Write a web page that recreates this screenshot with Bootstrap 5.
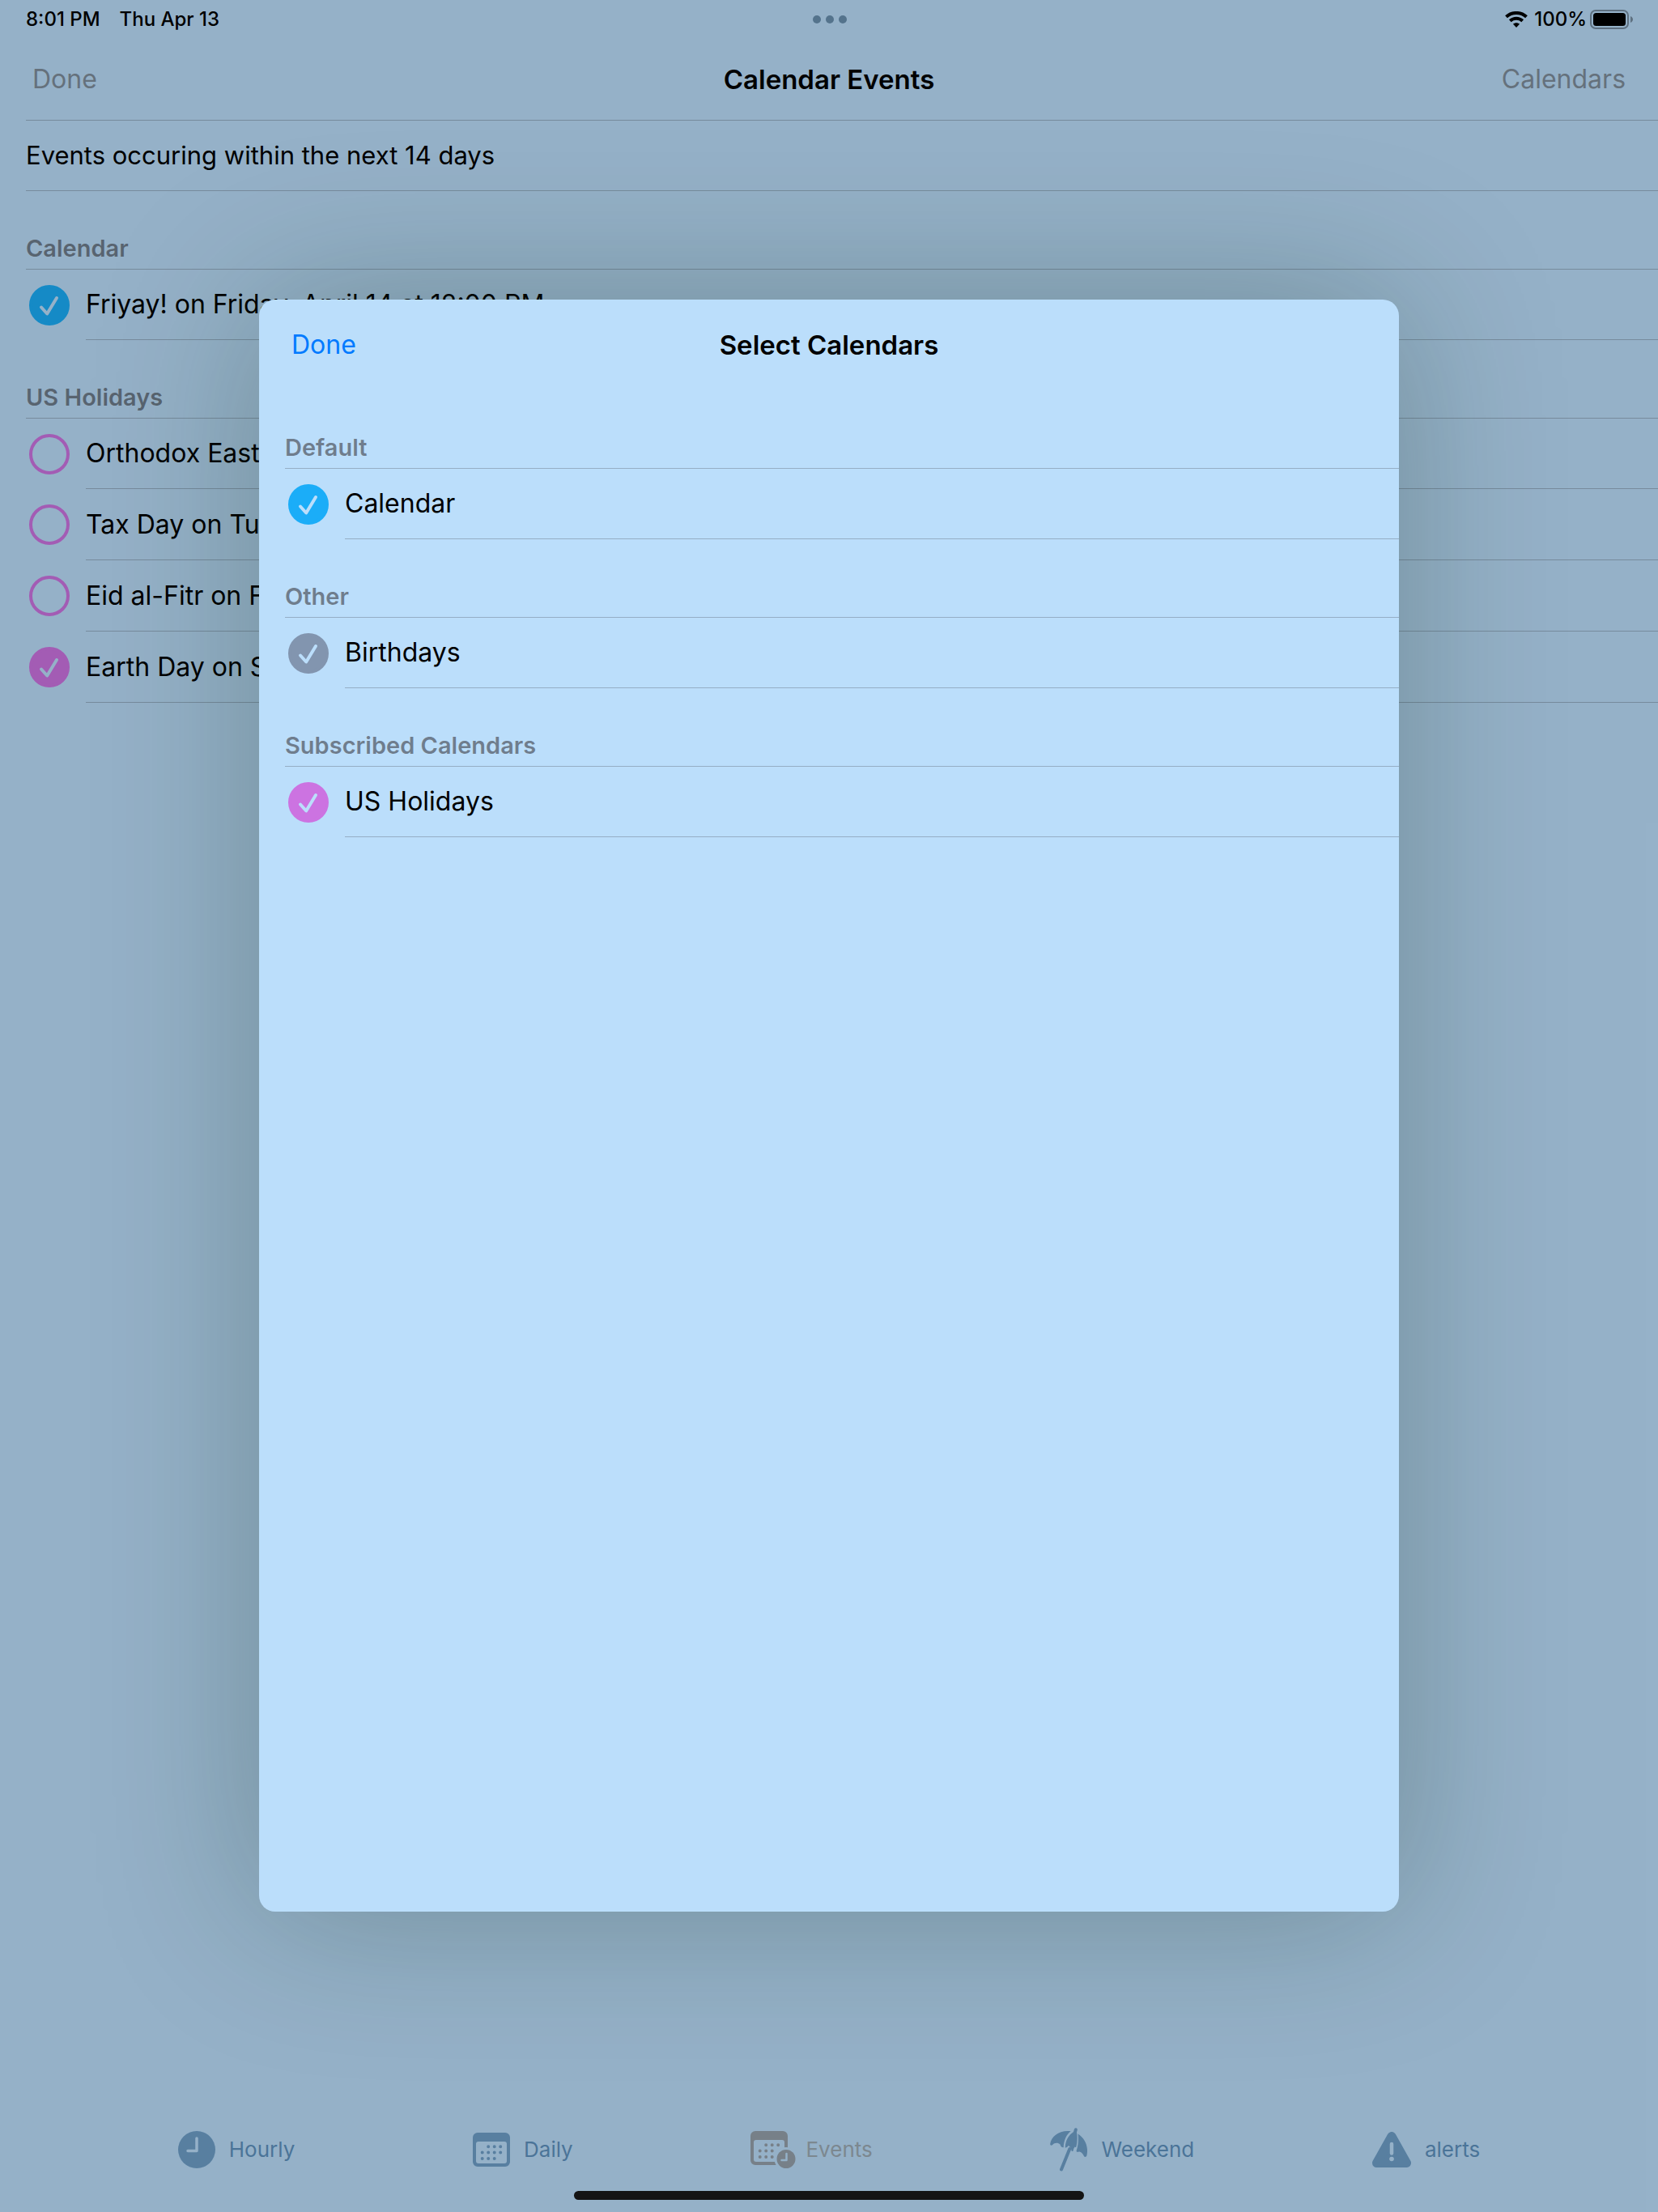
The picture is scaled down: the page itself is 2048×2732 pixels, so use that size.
<!DOCTYPE html>
<html lang="en">
<head>
<meta charset="utf-8">
<meta name="viewport" content="width=device-width, initial-scale=1">
<title>Calendar Events</title>
<link href="https://cdn.jsdelivr.net/npm/bootstrap@5.3.0/dist/css/bootstrap.min.css" rel="stylesheet">
<style>
  :root { --sky: #bbdefb; --hairline: rgba(60, 60, 67, .29); --muted: rgba(60, 60, 67, .6); }
  body { background: var(--sky); color: #000; font-family: Inter, "Liberation Sans", sans-serif; font-size: 32px; line-height: 40px; }
  .status-bar { height: 48px; padding: 0 30px 0 32px; font-size: 24px; line-height: 30px; font-weight: 500; }
  .status-bar > div { flex: 1 1 0; }
  .title-bar { height: 100px; padding: 0 40px; }
  .title-bar h1, .sheet-bar h2 { font-size: 33px; line-height: 40px; font-weight: 600; }
  .title-bar > div, .sheet-bar > div { flex: 1 1 0; }
  .bar-btn { border: 0; padding: 0; background: none; font-size: 32px; line-height: 40px; color: #7f8e9b; }
  .sheet .bar-btn { color: #007aff; }
  .note-row { height: 88px; margin-left: 32px; border-top: 1px solid var(--hairline); border-bottom: 1px solid var(--hairline); font-size: 31px; }
  .group-title { height: 97px; margin: 0 0 0 32px; padding-bottom: 7px; border-bottom: 1px solid var(--hairline); font-size: 29px; line-height: 36px; font-weight: 600; color: var(--muted); }
  .check-row { padding-left: 36px; gap: 20px; height: 88px; }
  .group-title + .check-row { height: 87px; }
  .check-row label { border-bottom: 1px solid var(--hairline); white-space: nowrap; }
  .dot-check.form-check-input { width: 50px; height: 50px; margin: 0; border: 4px solid var(--tone); border-radius: 50%; background-color: transparent; background-origin: border-box; background-size: 50px 50px; }
  .dot-check.form-check-input:checked { background-color: var(--tone); border-color: var(--tone); background-image: url("data:image/svg+xml,%3Csvg xmlns='http://www.w3.org/2000/svg' viewBox='0 0 50 50'%3E%3Cpath d='M15 27.5l7.2 8L34 16' fill='none' stroke='%23bbdefb' stroke-width='4' stroke-linecap='round' stroke-linejoin='round'/%3E%3C/svg%3E"); }
  .tone-blue { --tone: #1badf8; }
  .tone-pink { --tone: #cc73e1; }
  .tone-slate { --tone: #8295af; }
  .tab-row { height: 102px; font-size: 26px; line-height: 30px; }
  .tab-row a { gap: 17px; color: #5e92bf; text-decoration: none; }
  .tab-row svg { color: #6e9fc9; }
  .tab-row a.active { color: #9caab4; gap: 12px; }
  .tab-row a.active svg { color: #95a1ab; }
  .home-bar { width: 630px; height: 11px; margin-bottom: 15px; border-radius: 6px; background: #141414; }
  .dimmer { background: rgba(0, 0, 0, .2); padding: 370px 320px 371px; }
  .sheet { background: var(--sky); border-radius: 20px; box-shadow: 0 0 200px rgba(10, 45, 25, .27); }
  .sheet-bar { height: 112px; padding: 0 40px; }
</style>
</head>
<body>
<div class="position-relative min-vh-100 d-flex flex-column overflow-hidden">
  <div class="status-bar d-flex align-items-center">
    <div class="d-flex gap-4"><span>8:01 PM</span><span>Thu Apr 13</span></div>
    <svg width="44" height="10" viewBox="0 0 44 10" fill="#6990b0" aria-hidden="true"><circle cx="6" cy="5" r="5"/><circle cx="22" cy="5" r="5"/><circle cx="38" cy="5" r="5"/></svg>
    <div class="d-flex align-items-center justify-content-end">
      <svg class="me-2" width="28" height="20" viewBox="0 0 28 20" fill="none" stroke="#000" aria-hidden="true"><path d="M1.500 6.800C8.500 .3 19.500 .3 26.500 6.800" stroke-width="4"/><path d="M6.300 11.700c4.500-4 10.900-4 15.400 0" stroke-width="4"/><path d="M14 20l-4-4.200c2.200-2 5.800-2 8 0z" fill="#000" stroke="none"/></svg>
      <span>100%</span>
      <svg class="ms-1" width="54" height="24" viewBox="0 0 54 24" aria-hidden="true"><rect x="1" y="1" width="46" height="22" rx="6" fill="none" stroke="#768da1" stroke-width="2"/><rect x="4" y="4" width="40" height="16" rx="3.500"/><path d="M50 8c4 1.500 4 6.500 0 8z" fill="#768da1"/></svg>
    </div>
  </div>
  <header class="title-bar d-flex align-items-center">
    <div><button type="button" class="bar-btn">Done</button></div>
    <h1 class="m-0">Calendar Events</h1>
    <div class="text-end"><button type="button" class="bar-btn">Calendars</button></div>
  </header>
  <main class="flex-grow-1">
    <div class="note-row d-flex align-items-center">Events occuring within the next 14 days</div>
    <section>
      <h2 class="group-title d-flex align-items-end">Calendar</h2>
      <div class="check-row d-flex align-items-center"><input class="form-check-input dot-check tone-blue flex-shrink-0" type="checkbox" id="friyay" checked><label for="friyay" class="flex-grow-1 h-100 d-flex align-items-center">Friyay! on Friday, April 14 at 12:00 PM</label></div>
    </section>
    <section>
      <h2 class="group-title d-flex align-items-end">US Holidays</h2>
      <div class="check-row d-flex align-items-center"><input class="form-check-input dot-check tone-pink flex-shrink-0" type="checkbox" id="easter"><label for="easter" class="flex-grow-1 h-100 d-flex align-items-center">Orthodox Easter</label></div>
      <div class="check-row d-flex align-items-center"><input class="form-check-input dot-check tone-pink flex-shrink-0" type="checkbox" id="tax"><label for="tax" class="flex-grow-1 h-100 d-flex align-items-center">Tax Day on Tuesday</label></div>
      <div class="check-row d-flex align-items-center"><input class="form-check-input dot-check tone-pink flex-shrink-0" type="checkbox" id="eid"><label for="eid" class="flex-grow-1 h-100 d-flex align-items-center">Eid al-Fitr on Friday</label></div>
      <div class="check-row d-flex align-items-center"><input class="form-check-input dot-check tone-pink flex-shrink-0" type="checkbox" id="earth" checked><label for="earth" class="flex-grow-1 h-100 d-flex align-items-center">Earth Day on Saturday</label></div>
    </section>
  </main>
  <footer class="d-flex flex-column align-items-center">
    <nav class="tab-row w-100 d-flex justify-content-evenly">
      <a href="#" class="d-flex align-items-center">
        <svg width="46" height="46" viewBox="0 0 46 46" aria-hidden="true"><circle cx="23" cy="23" r="23" fill="currentColor"/><path d="M23 9v15.500H12" fill="none" stroke="#bbdefb" stroke-width="3.500" stroke-linecap="round" stroke-linejoin="round"/></svg>
        <span>Hourly</span></a>
      <a href="#" class="d-flex align-items-center">
        <svg width="46" height="42" viewBox="0 0 46 42" fill="currentColor" aria-hidden="true"><path fill-rule="evenodd" d="M6 0h34a6 6 0 0 1 6 6v30a6 6 0 0 1-6 6H6a6 6 0 0 1-6-6V6a6 6 0 0 1 6-6zM7 11a3 3 0 0 0-3 3v21a3 3 0 0 0 3 3h32a3 3 0 0 0 3-3V14a3 3 0 0 0-3-3z"/><path d="M19.200 17.200h.01M26.700 17.200h.01M34.200 17.200h.01M11.700 24.500h.01M19.200 24.500h.01M26.700 24.500h.01M34.200 24.500h.01M11.700 32h.01M19.200 32h.01M26.700 32h.01" stroke="currentColor" stroke-width="4" stroke-linecap="round"/></svg>
        <span>Daily</span></a>
      <a href="#" class="active d-flex align-items-center" aria-current="page">
        <svg width="56" height="46" viewBox="0 0 56 46" fill="currentColor" aria-hidden="true"><path fill-rule="evenodd" d="M6 0h34a6 6 0 0 1 6 6v30a6 6 0 0 1-6 6H6a6 6 0 0 1-6-6V6a6 6 0 0 1 6-6zM7 11a3 3 0 0 0-3 3v21a3 3 0 0 0 3 3h32a3 3 0 0 0 3-3V14a3 3 0 0 0-3-3z"/><path d="M19.200 17.200h.01M26.700 17.200h.01M34.200 17.200h.01M11.700 24.500h.01M19.200 24.500h.01M26.700 24.500h.01M11.700 32h.01M19.200 32h.01M26.700 32h.01" stroke="currentColor" stroke-width="4" stroke-linecap="round"/><circle cx="44" cy="34.500" r="14.500" fill="#bbdefb"/><circle cx="44" cy="34.500" r="11.500"/><path d="M44.500 28v8H38.500" fill="none" stroke="#bbdefb" stroke-width="2.500" stroke-linecap="round" stroke-linejoin="round"/></svg>
        <span>Events</span></a>
      <a href="#" class="d-flex align-items-center">
        <svg width="46" height="54" viewBox="0 0 46 54" fill="currentColor" aria-hidden="true"><path d="M.2 20C1.500 10 12 2.500 25.700 4.200 20.500 8 17 15 16.700 24.200 14.500 24.500 13 23 12.500 20.500 9.500 18 5.500 18.500 3 21.200 1.500 22.200 0 21.500.2 20z"/><path d="M29.500 4.800C23 9 19 15.500 18.700 24.500c1.600.5 3-1 4-2.500 1.800 1 3.500 3.500 4 6.800.8.500 1.800.2 2-.6.3-2 1-3.600 2-4.700.8.900 1.600.6 1.800-.5C34 16.500 34 10 32.800 4.800z"/><path d="M34.600 7.500C43 13 48 23 45.300 34.500c-.5 1.800-2.800 2-3.500.3C40.700 32 39 30.300 36.600 29.500c-1.300-.4-2.300.8-3.300.3-.9-.5-.8-1.500-.4-2.500 2-6 2.500-13 1.700-19.800z"/><path d="M31.800 2.300L30.800 6M24.300 26L14 51.500" fill="none" stroke="currentColor" stroke-width="4" stroke-linecap="round"/></svg>
        <span>Weekend</span></a>
      <a href="#" class="d-flex align-items-center">
        <svg width="48" height="44" viewBox="0 0 48 44" aria-hidden="true"><path d="M24 5.500L42.500 38.500H5.500z" fill="currentColor" stroke="currentColor" stroke-width="11" stroke-linejoin="round"/><path d="M24 15v11.500" stroke="#bbdefb" stroke-width="4.500" stroke-linecap="round"/><circle cx="24" cy="33.500" r="2.800" fill="#bbdefb"/></svg>
        <span>alerts</span></a>
    </nav>
    <div class="home-bar position-relative z-3"></div>
  </footer>

  <div class="dimmer position-absolute top-0 start-0 w-100 h-100 d-flex z-2">
    <div class="sheet w-100 overflow-hidden" role="dialog" aria-modal="true" aria-labelledby="sheet-title">
      <div class="sheet-bar d-flex align-items-center">
        <div><button type="button" class="bar-btn">Done</button></div>
        <h2 class="m-0" id="sheet-title">Select Calendars</h2>
        <div></div>
      </div>
      <section>
        <h3 class="group-title d-flex align-items-end">Default</h3>
        <div class="check-row d-flex align-items-center"><input class="form-check-input dot-check tone-blue flex-shrink-0" type="checkbox" id="cal" checked><label for="cal" class="flex-grow-1 h-100 d-flex align-items-center">Calendar</label></div>
      </section>
      <section>
        <h3 class="group-title d-flex align-items-end">Other</h3>
        <div class="check-row d-flex align-items-center"><input class="form-check-input dot-check tone-slate flex-shrink-0" type="checkbox" id="birthdays" checked><label for="birthdays" class="flex-grow-1 h-100 d-flex align-items-center">Birthdays</label></div>
      </section>
      <section>
        <h3 class="group-title d-flex align-items-end">Subscribed Calendars</h3>
        <div class="check-row d-flex align-items-center"><input class="form-check-input dot-check tone-pink flex-shrink-0" type="checkbox" id="holidays" checked><label for="holidays" class="flex-grow-1 h-100 d-flex align-items-center">US Holidays</label></div>
      </section>
    </div>
  </div>
</div>
<script src="https://cdn.jsdelivr.net/npm/bootstrap@5.3.0/dist/js/bootstrap.bundle.min.js"></script>
</body>
</html>
